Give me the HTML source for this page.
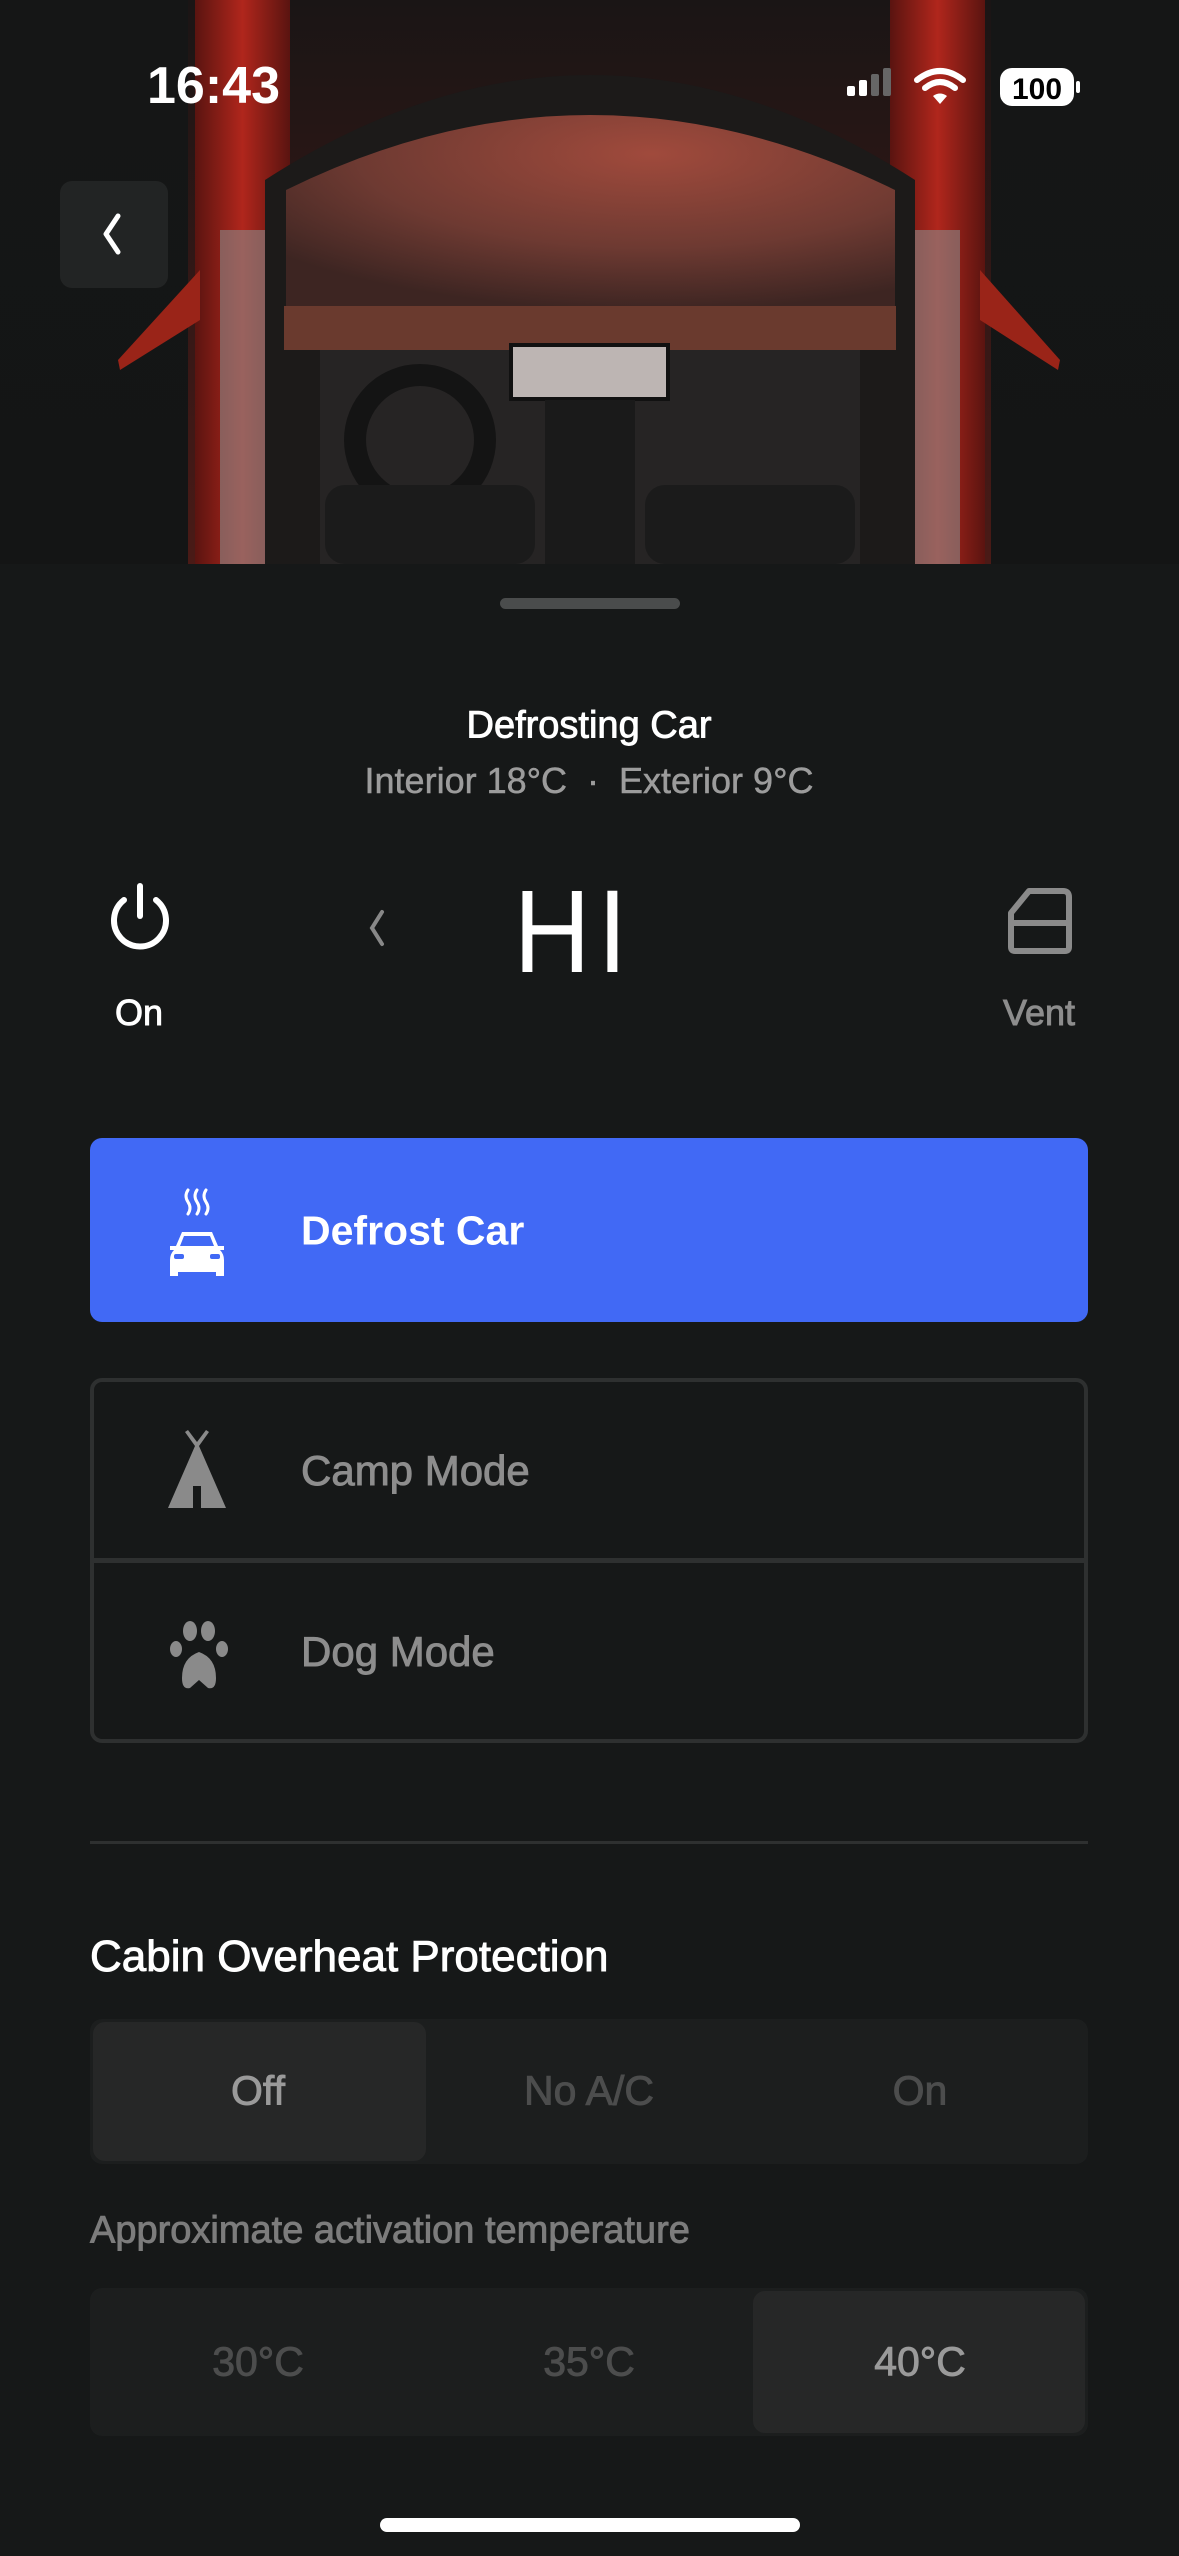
<!DOCTYPE html>
<html><head><meta charset="utf-8"><style>
*{margin:0;padding:0;box-sizing:border-box}
body{width:1179px;height:2556px;background:#161818;position:relative;overflow:hidden;font-family:"Liberation Sans",sans-serif;color:#fff}
.a{position:absolute}
.c{position:absolute;white-space:nowrap;transform:translate(-50%,-50%)}
.l{position:absolute;white-space:nowrap;transform:translateY(-50%)}
.m{-webkit-text-stroke:0.9px currentColor}
</style></head><body>
<svg class="a" style="left:0;top:0" width="1179" height="564" viewBox="0 0 1179 564">
<defs>
<linearGradient id="bg" x1="0" y1="0" x2="0" y2="1"><stop offset="0" stop-color="#151616"/><stop offset="1" stop-color="#141515"/></linearGradient>
<radialGradient id="roof" cx="0.6" cy="0.2" r="0.8"><stop offset="0" stop-color="#a04a3c"/><stop offset="0.6" stop-color="#6e3a32"/><stop offset="1" stop-color="#3d2522"/></radialGradient>
<linearGradient id="side" x1="0" y1="0" x2="1" y2="0"><stop offset="0" stop-color="#5a1410"/><stop offset="0.5" stop-color="#b0261c"/><stop offset="1" stop-color="#5a1410"/></linearGradient>
<linearGradient id="top" x1="0" y1="0" x2="0" y2="1"><stop offset="0" stop-color="#1a1515"/><stop offset="1" stop-color="#4a1a16"/></linearGradient>
</defs>
<rect width="1179" height="564" fill="url(#bg)"/>
<rect x="188" y="0" width="803" height="564" fill="url(#top)"/>
<rect x="195" y="0" width="95" height="564" fill="url(#side)"/>
<rect x="890" y="0" width="95" height="564" fill="url(#side)"/>
<rect x="220" y="230" width="45" height="334" fill="#8a8a8a" opacity="0.6"/>
<rect x="915" y="230" width="45" height="334" fill="#8a8a8a" opacity="0.6"/>
<path d="M200 270 L118 360 L120 370 L200 320 Z" fill="#9a2418"/>
<path d="M980 270 L1060 360 L1058 370 L980 320 Z" fill="#9a2418"/>
<path d="M265 180 Q590 -30 915 180 L915 564 L265 564 Z" fill="#1c1a19"/>
<path d="M286 310 L286 190 Q590 40 895 190 L895 310 Z" fill="url(#roof)"/>
<rect x="284" y="306" width="612" height="44" fill="#6a3a2e"/>
<rect x="320" y="350" width="540" height="214" fill="#262424"/>
<rect x="511" y="345" width="157" height="54" fill="#bdb5b3" stroke="#111" stroke-width="4"/>
<circle cx="420" cy="440" r="65" fill="none" stroke="#141414" stroke-width="22"/>
<rect x="545" y="400" width="90" height="164" fill="#1a1a1a"/>
<rect x="325" y="485" width="210" height="79" rx="20" fill="#1b1b1b"/>
<rect x="645" y="485" width="210" height="79" rx="20" fill="#1b1b1b"/>
</svg>
<div class="l" style="left:147px;top:86px;font-size:52px;font-weight:bold">16:43</div>
<svg class="a" style="left:845px;top:66px" width="240" height="44" viewBox="0 0 240 44">
<rect x="2" y="20" width="8" height="10" rx="2" fill="#fff"/><rect x="14" y="14" width="8" height="16" rx="2" fill="#fff"/>
<rect x="26" y="8" width="8" height="22" rx="2" fill="#666"/><rect x="38" y="2" width="8" height="28" rx="2" fill="#666"/>
<g fill="none" stroke="#fff" stroke-width="6" stroke-linecap="round"><path d="M72 14 Q95 -4 118 14"/><path d="M80 22 Q95 10 110 22"/></g>
<path d="M88 30 L95 38 L102 30 Q95 25 88 30Z" fill="#fff"/>
<rect x="155" y="2" width="74" height="38" rx="12" fill="#fff"/>
<rect x="231" y="15" width="4" height="12" rx="2" fill="#fff"/>
<text x="192" y="33" text-anchor="middle" font-family="Liberation Sans" font-weight="bold" font-size="30" fill="#000">100</text>
</svg>
<div class="a" style="left:60px;top:181px;width:108px;height:107px;border-radius:12px;background:#222424"></div>
<svg class="a" style="left:98px;top:212px" width="30" height="44" viewBox="0 0 30 44"><path d="M20 4 L8 22 L20 40" fill="none" stroke="#fff" stroke-width="5" stroke-linecap="round" stroke-linejoin="round"/></svg>
<div class="a" style="left:500px;top:598px;width:180px;height:11px;border-radius:6px;background:#4a4c4c"></div>
<div class="c m" style="left:589px;top:726px;font-size:38px">Defrosting Car</div>
<div class="c m" style="left:589px;top:781px;font-size:36px;color:#9c9c9c;-webkit-text-stroke:0.5px #9c9c9c">Interior 18°C &nbsp;·&nbsp; Exterior 9°C</div>
<svg class="a" style="left:106px;top:882px" width="68" height="72" viewBox="0 0 68 72"><path d="M18 18 A26 26 0 1 0 50 18" fill="none" stroke="#fff" stroke-width="6" stroke-linecap="round"/><path d="M34 4 L34 34" stroke="#fff" stroke-width="6" stroke-linecap="round"/></svg>
<div class="c m" style="left:139px;top:1013px;font-size:36px">On</div>
<svg class="a" style="left:364px;top:906px" width="26" height="44" viewBox="0 0 26 44"><path d="M18 6 L8 22 L18 38" fill="none" stroke="#888" stroke-width="4" stroke-linecap="round"/></svg>
<div class="c" style="left:574px;top:932px;font-size:118px;letter-spacing:8px;transform:translate(-50%,-50%) scaleX(0.9)">HI</div>
<svg class="a" style="left:1005px;top:885px" width="70" height="70" viewBox="0 0 70 70"><path d="M6 28 L24 6 L58 6 Q64 6 64 12 L64 62 Q64 66 60 66 L10 66 Q6 66 6 62 Z M6 38 L64 38" fill="none" stroke="#8a8a8a" stroke-width="6" stroke-linejoin="round"/></svg>
<div class="c m" style="left:1039px;top:1013px;font-size:36px;color:#8d8d8d">Vent</div>
<div class="a" style="left:90px;top:1138px;width:998px;height:184px;border-radius:12px;background:#4169f5"></div>
<svg class="a" style="left:166px;top:1188px" width="62" height="100" viewBox="0 0 62 100">
<g fill="none" stroke="#fff" stroke-width="3" stroke-linecap="round"><path d="M22 2 Q18 8 22 14 Q26 20 22 26"/><path d="M31 2 Q27 8 31 14 Q35 20 31 26"/><path d="M40 2 Q36 8 40 14 Q44 20 40 26"/></g>
<path d="M16 44 L46 44 L52 58 L58 58 L58 62 L54 62 Q58 66 58 72 L58 88 L50 88 L50 84 L12 84 L12 88 L4 88 L4 72 Q4 66 8 62 L4 62 L4 58 L10 58 Z" fill="#fff"/>
<path d="M18 48 L44 48 L48 58 L14 58 Z" fill="#4169f5"/>
<rect x="8" y="66" width="10" height="5" rx="2" fill="#4169f5"/><rect x="44" y="66" width="10" height="5" rx="2" fill="#4169f5"/>
</svg>
<div class="l" style="left:301px;top:1231px;font-size:41px;font-weight:bold">Defrost Car</div>
<div class="a" style="left:90px;top:1378px;width:998px;height:365px;border:4px solid #2e3030;border-radius:12px"></div>
<div class="a" style="left:94px;top:1558px;width:990px;height:5px;background:#2e3030"></div>
<svg class="a" style="left:166px;top:1428px" width="62" height="82" viewBox="0 0 62 82"><path d="M22 2 L31 14 L40 2 L43 4 L33 18 L60 80 L2 80 L29 18 L19 4 Z" fill="#8a8a8a"/><rect x="27" y="58" width="8" height="22" fill="#161818"/></svg>
<div class="l m" style="left:301px;top:1471px;font-size:42px;color:#8d8d8d">Camp Mode</div>
<svg class="a" style="left:168px;top:1618px" width="62" height="74" viewBox="0 0 62 74"><g fill="#8a8a8a"><ellipse cx="22" cy="13" rx="7" ry="10"/><ellipse cx="40" cy="13" rx="7" ry="10"/><ellipse cx="8" cy="31" rx="6" ry="8"/><ellipse cx="54" cy="31" rx="6" ry="8"/><path d="M31 34 Q48 40 48 60 Q48 72 40 70 L31 62 L22 70 Q14 72 14 60 Q14 40 31 34Z"/></g></svg>
<div class="l m" style="left:301px;top:1652px;font-size:42px;color:#8d8d8d">Dog Mode</div>
<div class="a" style="left:90px;top:1841px;width:998px;height:3px;background:#2e3030"></div>
<div class="l m" style="left:90px;top:1957px;font-size:44px">Cabin Overheat Protection</div>
<div class="a" style="left:90px;top:2019px;width:998px;height:145px;border-radius:12px;background:#1c1e1e"></div>
<div class="a" style="left:93px;top:2022px;width:333px;height:139px;border-radius:12px;background:#262727"></div>
<div class="c m" style="left:258px;top:2091px;font-size:41px;color:#9a9a9a">Off</div>
<div class="c m" style="left:589px;top:2091px;font-size:41px;color:#4c4d4d">No A/C</div>
<div class="c m" style="left:920px;top:2091px;font-size:41px;color:#4c4d4d">On</div>
<div class="l m" style="left:90px;top:2231px;font-size:38px;color:#7c7c7c">Approximate activation temperature</div>
<div class="a" style="left:90px;top:2288px;width:998px;height:148px;border-radius:12px;background:#1c1e1e"></div>
<div class="a" style="left:753px;top:2291px;width:332px;height:142px;border-radius:12px;background:#262727"></div>
<div class="c m" style="left:258px;top:2362px;font-size:41px;color:#4c4d4d">30°C</div>
<div class="c m" style="left:589px;top:2362px;font-size:41px;color:#4c4d4d">35°C</div>
<div class="c m" style="left:920px;top:2362px;font-size:41px;color:#9a9a9a">40°C</div>
<div class="a" style="left:380px;top:2518px;width:420px;height:14px;border-radius:7px;background:#fff"></div>
</body></html>
